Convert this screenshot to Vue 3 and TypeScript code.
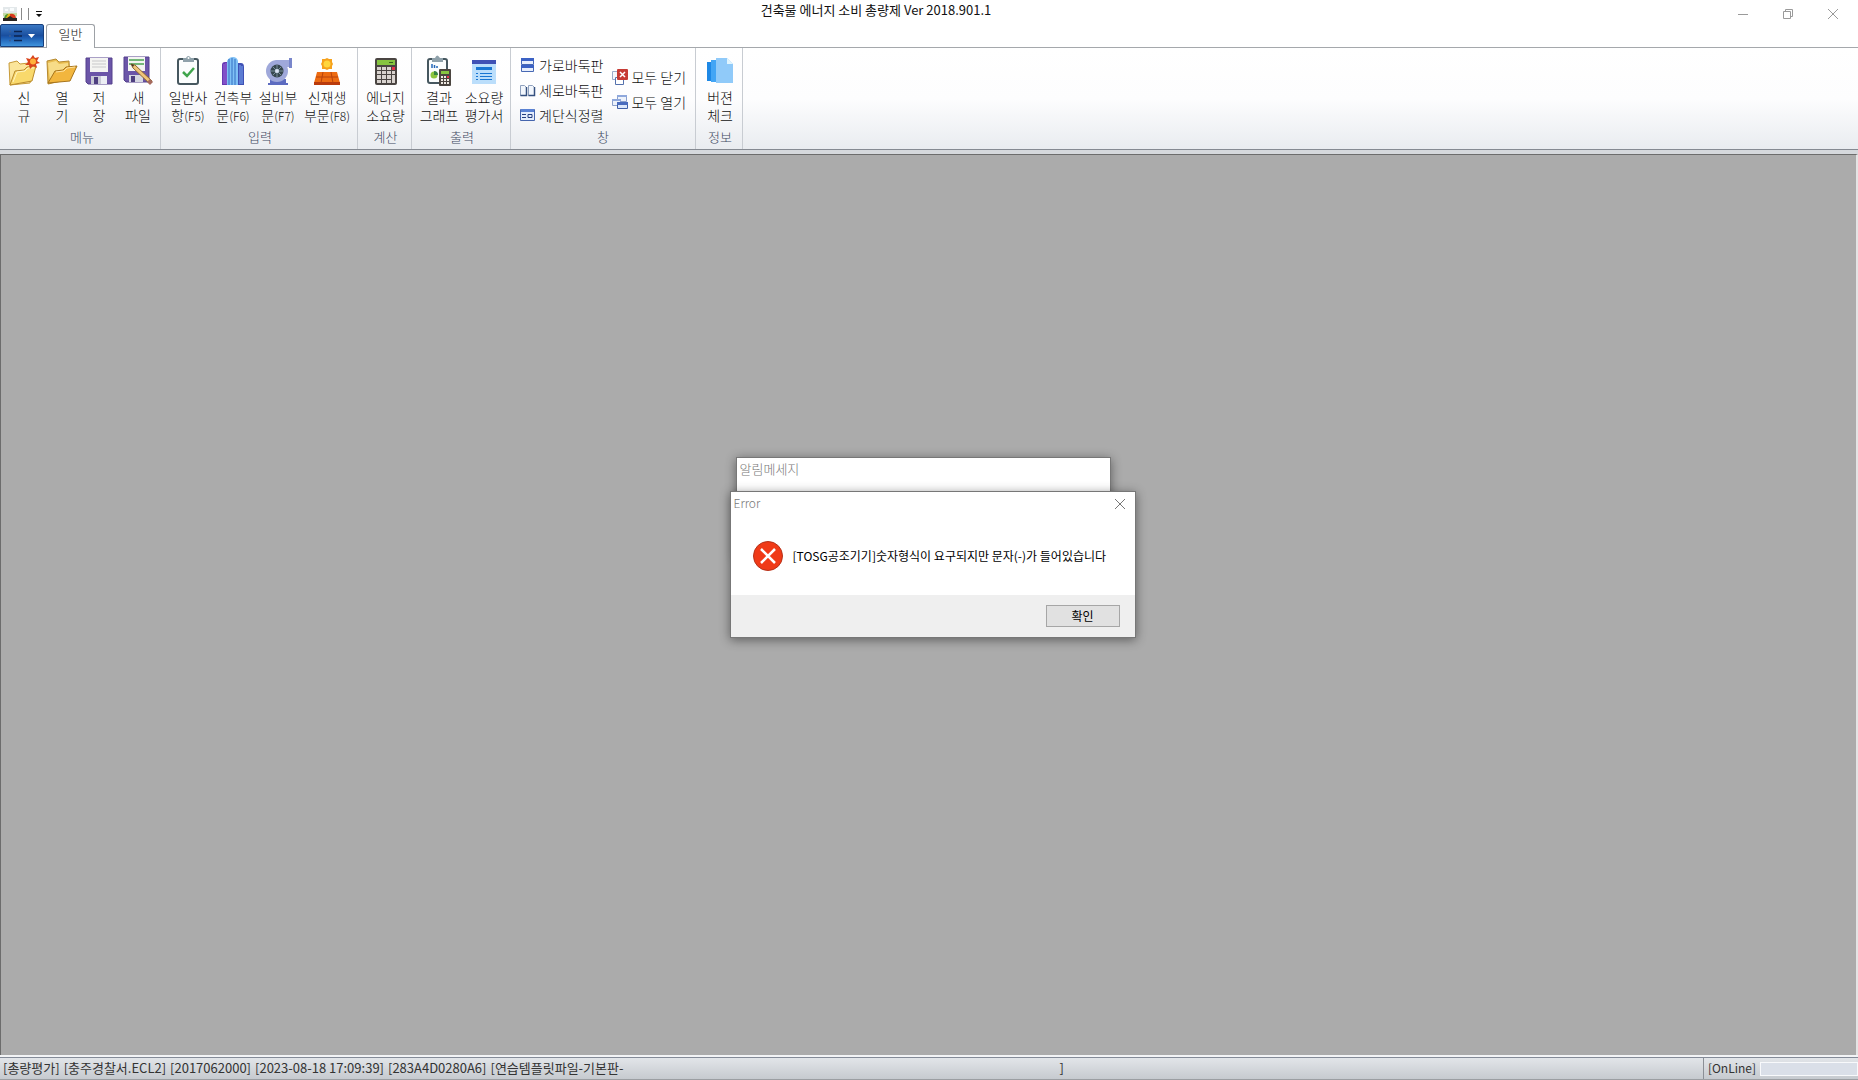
<script setup lang="ts">
import { ref } from 'vue'

const title = '건축물 에너지 소비 총량제 Ver 2018.901.1'
const statusItems: string[] = [
  '[총량평가]',
  '[충주경찰서.ECL2]',
  '[2017062000]',
  '[2023-08-18 17:09:39]',
  '[283A4D0280A6]',
  '[연습템플릿파일-기본판-',
]
const progress = ref(0)
</script>

<template>
  <div class="app">
    <header class="titlebar">
      <div class="quick">
        <svg width="14" height="14" viewBox="0 0 14 14" aria-hidden="true">
          <rect width="14" height="14" fill="#e3e8ea" />
          <path d="M2 2h3v2H2zM7 1h4v3H7z" fill="#f8fbfc" />
          <path d="M0 6h14v3H0z" fill="#c5dba8" />
          <path d="M1 11q1-4 4-4v4z" fill="#4d9a2b" />
          <path d="M4 9q1-3 4-2v4H3z" fill="#e5b31d" />
          <path d="M7 7q5-1 6 4H7z" fill="#d8391c" />
          <path d="M0 11l4 0 3-2 3 2 4 0v3H0z" fill="#2b2521" />
        </svg>
        <i class="bar"></i><i class="bar"></i>
        <button class="more" aria-label="빠른 실행">
          <svg width="8" height="7" viewBox="0 0 8 7"><path d="M1 0h6v1H1zM1 3h6L4 6z" fill="#111" /></svg>
        </button>
      </div>
      <h1>{{ title }}</h1>
      <div class="winbtns">
        <button aria-label="최소화"><svg width="12" height="12" viewBox="0 0 12 12"><path d="M1 6.500h10" /></svg></button>
        <button aria-label="이전 크기로"><svg width="12" height="12" viewBox="0 0 12 12"><path d="M1.500 3.500h7v7h-7zM3.500 3.500v-2h7v7h-2" /></svg></button>
        <button aria-label="닫기"><svg width="12" height="12" viewBox="0 0 12 12"><path d="M1 1l10 10M11 1L1 11" /></svg></button>
      </div>
    </header>

    <nav class="tabs">
      <button class="appmenu" aria-label="메뉴">
        <svg width="28" height="12" viewBox="0 0 28 12">
          <path d="M6 1.500h8M6 6h8M6 10.500h8" stroke="#0c2450" stroke-width="1.500" />
          <path d="M1 1.500h2M1 6h2M1 10.500h2" stroke="#3a5f98" stroke-width="1.500" />
          <path d="M20 4h7l-3.500 4z" fill="#fff" />
        </svg>
      </button>
      <button class="tab">일반</button>
    </nav>

    <section class="ribbon">
      <div class="group menu">
        <div class="items">
          <button class="big w38">
            <svg width="32" height="32" viewBox="0 0 32 32">
              <path d="M1 8l8-2 3 3 9-1 5 6-4 14-20 2z" fill="#fbe59a" stroke="#c79a38" />
              <path d="M2 30l5-14 9-1 3-3 9-1-4 15z" fill="#f9d96c" stroke="#b98a2c" />
              <path d="M5 27l4-10 8-1 3-3 6 0" stroke="#fff4c2" fill="none" />
              <path d="M25 0l2 3 4-1-2 4 3 2-4 1 1 4-4-2-3 3-1-4-4 0 3-3-2-4 4 1z" fill="#d9441c" />
              <circle cx="25" cy="6.500" r="3" fill="#ffb13b" />
            </svg>
            <span>신<br />규</span>
          </button>
          <button class="big w38">
            <svg width="32" height="32" viewBox="0 0 32 32">
              <path d="M1 6l9-2 3 3 10-1 1 18-22 5z" fill="#e9bd50" stroke="#b68a30" />
              <path d="M2 8l8-2 3 3 9-1v8L4 26z" fill="#f7dc88" />
              <path d="M2 28l7-12 8-1 3-3 11-1-7 15z" fill="#f2b63e" stroke="#a6741c" />
              <path d="M10 17l8-1 3-3 8-1" stroke="#ffe2a0" fill="none" />
            </svg>
            <span>열<br />기</span>
          </button>
          <button class="big w36">
            <svg width="32" height="32" viewBox="0 0 32 32">
              <path d="M3 3h26v26H5l-2-2z" fill="#6b55a8" stroke="#54418c" />
              <path d="M7 3h18v14H7z" fill="#f4f4f2" />
              <path d="M9 6h14M9 9h14M9 12h14" stroke="#c8c8ca" />
              <path d="M8 21h16v8H8z" fill="#c9cad6" />
              <path d="M11 22h4v7h-4z" fill="#4e3f80" /><path d="M18 21h6v8h-6z" fill="#eceef4" />
            </svg>
            <span>저<br />장</span>
          </button>
          <button class="big w42">
            <svg width="32" height="32" viewBox="0 0 32 32">
              <path d="M2 2h25v25H4l-2-2z" fill="#6b55a8" stroke="#54418c" />
              <path d="M6 2h17v14H6z" fill="#f4f4f2" />
              <path d="M7 5h15M7 9h15" stroke="#48a352" stroke-width="1.500" />
              <path d="M7 20h14v7H7z" fill="#d6d7e2" /><path d="M9 21h4v6H9z" fill="#4e3f80" />
              <path d="M9 9l4 1 17 16-2 3L11 13z" fill="#f0c479" stroke="#8e6832" />
              <path d="M9 9l3 1-1 2z" fill="#332b25" />
              <path d="M28 24l3 3-3 3-3-3z" fill="#a56a5e" />
            </svg>
            <span>새<br />파일</span>
          </button>
        </div>
        <h2>메뉴</h2>
      </div>

      <div class="group">
        <div class="items">
          <button class="big w44">
            <svg width="32" height="32" viewBox="0 0 32 32">
              <rect x="6" y="4" width="20" height="25" rx="2" fill="#fbfdfd" stroke="#46575f" stroke-width="2" />
              <path d="M11 3h3q2-4 5 0h3v4H11z" fill="#8fa1aa" /><circle cx="16.500" cy="3" r="1" fill="#fff" />
              <path d="M11 17l4 4 7-8" stroke="#3fa54c" stroke-width="2.500" fill="none" />
            </svg>
            <span>일반사<br />항<small>(F5)</small></span>
          </button>
          <button class="big w46">
            <svg width="32" height="32" viewBox="0 0 32 32">
              <path d="M5 10q0-3 3-3h3v23H5z" fill="#6737b0" /><path d="M20 8h4q3 0 3 4v18h-7z" fill="#3f51b5" />
              <path d="M10 6q2-4 6-4t5 4v24H10z" fill="#7fc0f5" />
              <path d="M12 4v26M15 3v27M18 4v26" stroke="#346fc2" />
              <path d="M7 9v20M9 8v21" stroke="#9d6be0" /><path d="M23 10v19M25 11v18" stroke="#79a7f1" />
            </svg>
            <span>건축부<br />문<small>(F6)</small></span>
          </button>
          <button class="big w44">
            <svg width="32" height="32" viewBox="0 0 32 32">
              <path d="M13 5h14V3h3v10h-3v-1h-5z" fill="#9fa8da" />
              <path d="M8 24h16v4h2v2H6v-2h2z" fill="#5c6bc0" />
              <circle cx="15" cy="16" r="11" fill="#9fa8da" />
              <circle cx="15" cy="16" r="6.500" fill="#37474f" />
              <path d="M15 10v12M9 16h12M11 12l8 8M19 12l-8 8" stroke="#78909c" />
              <circle cx="15" cy="16" r="2" fill="#dce4f5" /><path d="M27 3h3v10h-3z" fill="#7986cb" />
            </svg>
            <span>설비부<br />문<small>(F7)</small></span>
          </button>
          <button class="big w54">
            <svg width="32" height="32" viewBox="0 0 32 32">
              <path d="M16 3l2 1 3 0 0 3 1 2-1 2 0 3-3 0-2 1-2-1-3 0 0-3-1-2 1-2 0-3 3 0z" fill="#f6a21c" />
              <circle cx="16" cy="9" r="3.500" fill="#ffd63c" />
              <path d="M6 17h20l3 11H3z" fill="#ed6b12" /><path d="M3 27h26v3H3z" fill="#b93a0c" />
              <path d="M12 17l-2 11M20 17l2 11M5 22h22" stroke="#b8420c" />
            </svg>
            <span>신재생<br />부문<small>(F8)</small></span>
          </button>
        </div>
        <h2>입력</h2>
      </div>

      <div class="group">
        <div class="items">
          <button class="big w45">
            <svg width="32" height="32" viewBox="0 0 32 32">
              <rect x="5" y="3" width="22" height="27" rx="2" fill="#4a4542" />
              <rect x="7" y="5" width="18" height="5" fill="#86c440" /><path d="M19 7.500h4" stroke="#38601d" />
              <path d="M7 12h4v3H7zm5 0h4v3h-4zm5 0h4v3h-4zM7 16h4v3H7zm5 0h4v3h-4zm5 0h4v3h-4zm5 0h3v3h-3zM7 20h4v4H7zm5 0h4v4h-4zm5 0h4v4h-4zm5 0h3v8h-3zM7 25h4v3H7zm5 0h4v3h-4zm5 0h4v3h-4z" fill="#d9d3cf" />
              <path d="M22 12h3v3h-3z" fill="#e8304a" />
            </svg>
            <span>에너지<br />소요량</span>
          </button>
        </div>
        <h2>계산</h2>
      </div>

      <div class="group">
        <div class="items">
          <button class="big w44">
            <svg width="32" height="32" viewBox="0 0 32 32">
              <rect x="5" y="4" width="19" height="24" rx="2" fill="#fbfdfd" stroke="#46575f" stroke-width="2" />
              <path d="M9 3h3q2-5 5 0h3v4H9z" fill="#8fa1aa" />
              <path d="M9 13V9M11.500 13v-3M14 13v-2" stroke="#2467b8" stroke-width="1.500" />
              <circle cx="11" cy="20" r="3.500" fill="#8cc63f" /><path d="M11 20v-4a4 4 0 0 1 4 4z" fill="#358543" />
              <rect x="16" y="14" width="12" height="17" rx="1" fill="#4b4540" />
              <path d="M18 16h8v3h-8z" fill="#86c440" />
              <path d="M18 21h2v2h-2zm3 0h2v2h-2zm-3 3h2v2h-2zm3 0h2v2h-2zm3 0h2v2h-2zm-6 3h2v2h-2zm3 0h2v2h-2zm3 0h2v2h-2z" fill="#eee9e2" />
              <path d="M24 21h2v2h-2z" fill="#e8304a" />
            </svg>
            <span>결과<br />그래프</span>
          </button>
          <button class="big w46">
            <svg width="32" height="32" viewBox="0 0 32 32">
              <path d="M4 5h24v24H4z" fill="#bbdefb" /><path d="M4 5h24v4H4z" fill="#3f51b5" />
              <path d="M8 12h16v3H8z" fill="#1976d2" />
              <path d="M8 18.500h2M12 18.500h12M8 21.500h2M12 21.500h12M8 24.500h2M12 24.500h12" stroke="#1976d2" />
            </svg>
            <span>소요량<br />평가서</span>
          </button>
        </div>
        <h2>출력</h2>
      </div>

      <div class="group window">
        <div class="items">
          <div class="stack">
            <button class="small">
              <svg width="16" height="16" viewBox="0 0 16 16">
                <path d="M1.500 1.500h12v6h-12zM1.500 8.500h12v6h-12z" fill="#e8effc" stroke="#4768b4" />
                <path d="M1 1h13v3H1zM1 8h13v3H1z" fill="#3c62c4" />
              </svg>가로바둑판
            </button>
            <button class="small">
              <svg width="16" height="16" viewBox="0 0 16 16">
                <path d="M.5 3.500h4l2 2v8h-6zM8.500 3.500h4l2 2v8h-6z" fill="#f3f7fd" stroke="#8fa1be" />
                <path d="M6.500 5v8.500h-6M14.500 5v8.500h-6" fill="none" stroke="#35507f" stroke-width="1.500" />
              </svg>세로바둑판
            </button>
            <button class="small">
              <svg width="16" height="16" viewBox="0 0 16 16">
                <path d="M.5 2.500h14v11H.5z" fill="#e4edfc" stroke="#4565ad" /><path d="M1 2h13v3H1z" fill="#5a82d4" />
                <path d="M2 7.500h4M2 10.500h4M8 7.500h4v3H8z" stroke="#243f80" fill="none" />
              </svg>계단식정렬
            </button>
          </div>
          <div class="stack">
            <button class="small">
              <svg width="16" height="16" viewBox="0 0 16 16">
                <path d="M.5 2.500h8v8h-8z" fill="#f6f8fc" stroke="#9aabca" />
                <path d="M3.500 8.500h8v7h-8z" fill="#fff" stroke="#5471ad" />
                <rect x="5" y="0" width="11" height="11" rx="1" fill="#c63b35" />
                <path d="M8 3l5 5M13 3L8 8" stroke="#fff" stroke-width="1.500" />
              </svg>모두 닫기
            </button>
            <button class="small">
              <svg width="16" height="16" viewBox="0 0 16 16">
                <path d="M5.500 1.500h9v6h-9z" fill="#edf2fb" stroke="#8ba0cc" /><path d="M5 1h10v2H5z" fill="#8fa8dc" />
                <path d="M.5 5.500h8v6h-8z" fill="#edf2fb" stroke="#8ba0cc" /><path d="M0 5h9v2H0z" fill="#8fa8dc" />
                <path d="M5.500 8.500h10v6h-10z" fill="#dce7fb" stroke="#4060a8" /><path d="M5 8h11v3H5z" fill="#4a6cbe" />
              </svg>모두 열기
            </button>
          </div>
        </div>
        <h2>창</h2>
      </div>

      <div class="group">
        <div class="items">
          <button class="big w38">
            <svg width="32" height="32" viewBox="0 0 32 32">
              <path d="M3 7h8v19H3z" fill="#1e88e5" /><path d="M7 5h10v22H7z" fill="#42a5f5" />
              <path d="M12 3h11l6 6v19H12z" fill="#90caf9" /><path d="M23 3l6 6h-6z" fill="#e1f5fe" />
            </svg>
            <span>버젼<br />체크</span>
          </button>
        </div>
        <h2>정보</h2>
      </div>
    </section>

    <main class="workspace">
      <section class="dialog notice">
        <h3>알림메세지</h3>
      </section>
      <section class="dialog error" role="alertdialog" aria-labelledby="err-title" aria-describedby="err-text">
        <header>
          <h3 id="err-title">Error</h3>
          <button class="close" aria-label="닫기">
            <svg width="12" height="12" viewBox="0 0 12 12"><path d="M1 1l10 10M11 1L1 11" /></svg>
          </button>
        </header>
        <div class="body">
          <svg width="30" height="30" viewBox="0 0 30 30" aria-hidden="true">
            <circle cx="15" cy="15" r="14.500" fill="#f03a17" stroke="#b5321a" />
            <path d="M8 8l14 14M22 8L8 22" stroke="#fff" stroke-width="2.500" />
          </svg>
          <p id="err-text">[TOSG공조기기]숫자형식이 요구되지만 문자(-)가 들어있습니다</p>
        </div>
        <footer><button class="ok">확인</button></footer>
      </section>
    </main>

    <footer class="status">
      <div class="info">
        <span v-for="item in statusItems" :key="item">{{ item }}</span>
        <span class="end">]</span>
      </div>
      <div class="online">
        <label for="load">[OnLine]</label>
        <progress id="load" :value="progress" max="100"></progress>
      </div>
    </footer>
  </div>
</template>

<style>
body {
  margin: 0;
}
</style>

<style scoped>
.app {
  display: flex;
  flex-direction: column;
  min-height: 100vh;
  background: #fff;
  color: #222;
  font-family: "Noto Sans CJK KR", "Noto Sans", sans-serif;
  font-size: 13px;
  font-weight: 300;
  line-height: 18px;
}
button {
  margin: 0;
  padding: 0;
  border: 0;
  background: none;
  color: inherit;
  font: inherit;
}
h1, h2, h3, p {
  margin: 0;
  font-weight: inherit;
  font-size: 13px;
}
svg {
  display: block;
  flex: none;
}
.titlebar {
  display: grid;
  grid-template-columns: 1fr auto 1fr;
  height: 24px;
}
.quick {
  display: flex;
  align-items: center;
  padding-left: 3px;
}
.bar {
  width: 1px;
  height: 12px;
  margin-left: 4px;
  background: #8a8a8a;
}
.bar + .bar {
  margin-left: 6px;
}
.more {
  margin-left: 6px;
}
h1 {
  padding-top: 1px;
  margin-right: 106px;
  color: #111;
  font-weight: 400;
}
.winbtns {
  display: flex;
  justify-content: flex-end;
  padding-right: 3px;
}
.winbtns button {
  display: flex;
  align-items: center;
  justify-content: center;
  width: 45px;
  height: 28px;
}
.winbtns svg, .close svg {
  fill: none;
  stroke: #9a9a9a;
}
.tabs {
  display: flex;
  gap: 2px;
  height: 23px;
}
.appmenu {
  display: flex;
  align-items: center;
  justify-content: center;
  width: 44px;
  border: 1px solid #173f7d;
  border-radius: 2px 2px 0 0;
  background: linear-gradient(#3a78c4, #1a4f9f 50%, #1c5bb0 60%, #3f93dc);
}
.tab {
  width: 49px;
  height: 24px;
  padding-bottom: 5px;
  border: 1px solid #9da1a6;
  border-bottom: 0;
  border-radius: 3px 3px 0 0;
  background: #fff;
  color: #111;
  z-index: 1;
}
.ribbon {
  display: flex;
  height: 101px;
  border-top: 1px solid #a5a8ac;
  border-bottom: 1px solid #858a92;
  background: linear-gradient(#fff, #fdfdfe 50%, #e9ecf0);
}
.group {
  display: flex;
  flex-direction: column;
  justify-content: space-between;
  padding: 0 3px 0 5px;
  border-right: 1px solid #c8ccd2;
}
.group.menu {
  padding-right: 1px;
}
.items {
  display: flex;
}
h2 {
  padding-bottom: 3px;
  color: #3f4a62;
  text-align: center;
}
.big {
  display: flex;
  flex-direction: column;
  align-items: center;
  padding-top: 7px;
  color: #111;
  font-size: 14px;
  white-space: nowrap;
}
.big svg {
  margin-bottom: 1px;
}
small {
  font-size: 12px;
}
.w36 { width: 36px; }
.w38 { width: 38px; }
.w42 { width: 42px; }
.w44 { width: 44px; }
.w45 { width: 45px; }
.w46 { width: 46px; }
.w54 { width: 54px; }
.group.window {
  padding: 0 9px;
}
.window .items {
  gap: 9px;
  align-items: center;
  padding-top: 4px;
}
.small {
  display: flex;
  align-items: center;
  gap: 3px;
  height: 25px;
  color: #111;
  font-size: 14px;
  white-space: nowrap;
}
.workspace {
  position: relative;
  flex: 1;
  margin-top: 4px;
  border: 1px solid #6c6c6c;
  border-right: 2px solid #e4e4e4;
  border-bottom: 0;
  background: #ababab;
  box-shadow: 0 -4px #d5d8dc;
}
.dialog {
  position: absolute;
  box-sizing: border-box;
  border: 1px solid #777;
  background: #fff;
  box-shadow: 0 2px 10px rgba(0, 0, 0, 0.45);
}
.dialog h3 {
  color: #777;
}
.notice {
  top: 302px;
  left: calc(50% - 193px);
  width: 375px;
  height: 100px;
  padding: 2px 3px;
}
.error {
  top: 336px;
  left: calc(50% - 199px);
  width: 406px;
}
.error header {
  display: flex;
  justify-content: space-between;
  height: 24px;
  padding: 2px 9px 0 3px;
}
.error h3 {
  font-size: 12px;
}
.close {
  display: flex;
  align-items: center;
  height: 20px;
}
.close svg {
  stroke: #777;
}
.body {
  display: flex;
  align-items: center;
  gap: 10px;
  height: 75px;
  padding: 0 0 2px 22px;
}
.body p {
  color: #000;
  font-size: 12px;
  font-weight: 400;
  white-space: nowrap;
}
.error footer {
  display: flex;
  justify-content: flex-end;
  padding: 10px 15px;
  background: #efefef;
}
.ok {
  width: 74px;
  height: 22px;
  border: 1px solid #a6a6a6;
  background: #e1e1e1;
  color: #000;
  font-size: 12px;
  font-weight: 400;
  line-height: 16px;
}
.status {
  display: flex;
  justify-content: space-between;
  height: 21px;
  margin-top: 2px;
  border-top: 1px solid #848b98;
  border-bottom: 1px solid #9b9ea2;
  background: linear-gradient(#e2e5e9, #c6cacf);
  box-shadow: 0 -2px #f3f4f6;
  color: #333;
  font-weight: 400;
}
.info {
  display: flex;
  flex: 1;
  align-items: center;
  gap: 4px;
  padding: 0 0 2px 3px;
  white-space: pre;
}
.end {
  margin-left: 432px;
}
.online {
  display: flex;
  align-items: center;
  gap: 4px;
  padding-left: 4px;
  border-left: 1px solid #8b8f96;
}
.online label {
  padding-bottom: 2px;
  font-size: 12px;
}
progress {
  appearance: none;
  box-sizing: border-box;
  width: 98px;
  height: 14px;
  border: 1px solid #f8f9fb;
  background: #dadfe8;
}
progress::-webkit-progress-bar {
  background: #dadfe8;
}
</style>
